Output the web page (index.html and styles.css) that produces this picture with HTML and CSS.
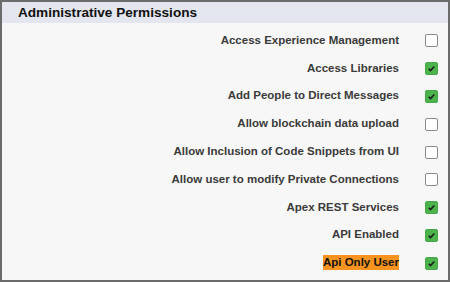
FILE: index.html
```html
<!DOCTYPE html>
<html lang="en">
<head>
  <meta charset="UTF-8">
  <title>Administrative Permissions</title>
  <link rel="stylesheet" href="styles.css">
</head>
<body>
  <div class="panel">
    <div class="panel-header">Administrative Permissions</div>

    <div class="perm-list">
      <div class="perm-row">
        <span class="perm-label">Access Experience Management</span>
        <span class="checkbox"></span>
      </div>
      <div class="perm-row">
        <span class="perm-label">Access Libraries</span>
        <span class="checkbox checked"><svg viewBox="0 0 13 13"><path d="M3.2 6.8 L5.4 9 L9.8 4.2"/></svg></span>
      </div>
      <div class="perm-row">
        <span class="perm-label">Add People to Direct Messages</span>
        <span class="checkbox checked"><svg viewBox="0 0 13 13"><path d="M3.2 6.8 L5.4 9 L9.8 4.2"/></svg></span>
      </div>
      <div class="perm-row">
        <span class="perm-label">Allow blockchain data upload</span>
        <span class="checkbox"></span>
      </div>
      <div class="perm-row">
        <span class="perm-label">Allow Inclusion of Code Snippets from UI</span>
        <span class="checkbox"></span>
      </div>
      <div class="perm-row">
        <span class="perm-label">Allow user to modify Private Connections</span>
        <span class="checkbox"></span>
      </div>
      <div class="perm-row">
        <span class="perm-label">Apex REST Services</span>
        <span class="checkbox checked"><svg viewBox="0 0 13 13"><path d="M3.2 6.8 L5.4 9 L9.8 4.2"/></svg></span>
      </div>
      <div class="perm-row">
        <span class="perm-label">API Enabled</span>
        <span class="checkbox checked"><svg viewBox="0 0 13 13"><path d="M3.2 6.8 L5.4 9 L9.8 4.2"/></svg></span>
      </div>
      <div class="perm-row">
        <span class="perm-label highlight">Api Only User</span>
        <span class="checkbox checked"><svg viewBox="0 0 13 13"><path d="M3.2 6.8 L5.4 9 L9.8 4.2"/></svg></span>
      </div>
    </div>
  </div>
</body>
</html>
```

FILE: styles.css
```css
body {
  margin: 0;
  font-family: "Liberation Sans", Arial, Helvetica, sans-serif;
  background: #f7f7f7;
  color: #333;
}
.panel {
  height: 282px;
  box-sizing: border-box;
  border: 2px solid #6b6b6b;
  background: #f7f7f7;
  display: flex;
  flex-direction: column;
}
.panel-header {
  background-color: #e3e6ee;
  color: #111;
  font-size: 13.6px;
  font-weight: bold;
  height: 21px;
  line-height: 21px;
  padding-left: 16px;
}

/* permission rows */
.perm-list {
  padding-top: 4px;
  display: flex;
  flex-direction: column;
}
.perm-row {
  height: 27.8px;
  display: flex;
  align-items: center;
  justify-content: flex-end;
  padding-right: 10px;
}
.perm-label {
  font-size: 11.5px;
  font-weight: bold;
  color: #3a3a3a;
  margin-right: 26px;
  margin-top: -2px;
}
.perm-label.highlight {
  background-color: #f7931e;
  color: #111;
  padding: 1px 0 2px;
}
.checkbox {
  width: 11px;
  height: 11px;
  border: 1px solid #8a8a8a;
  border-radius: 2px;
  background: #fff;
  display: flex;
}
.checkbox.checked {
  background: #4cb34c;
  border-color: #45a845;
}
.checkbox svg {
  width: 11px;
  height: 11px;
}
.checkbox path {
  fill: none;
  stroke: #1a1a1a;
  stroke-width: 1.8;
}
```
